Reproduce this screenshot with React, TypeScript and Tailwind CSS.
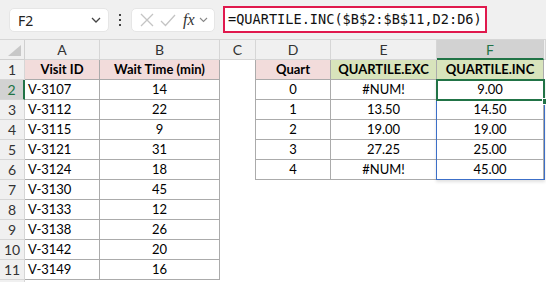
import React from "react";

const FONT = { fontFamily: "Lato, 'Open Sans', sans-serif" };

const colLetters = ["A", "B", "C", "D", "E", "F", ""];

const A = ["V-3107", "V-3112", "V-3115", "V-3121", "V-3124", "V-3130", "V-3133", "V-3138", "V-3142", "V-3149"];
const B = ["14", "22", "9", "31", "18", "45", "12", "26", "20", "16"];
const D = ["0", "1", "2", "3", "4"];
const E = ["#NUM!", "13.50", "19.00", "27.25", "#NUM!"];
const F = ["9.00", "14.50", "19.00", "25.00", "45.00"];

function Toolbar() {
  return (
    <div className="h-[40px] bg-[#f0f0f0] border-b border-[#d6d6d6] flex items-end pb-[7px] box-border">
      <div className="ml-[9px] mb-0 w-[100px] h-[24px] bg-white rounded-[5px] border border-[#e6e6e6] flex items-center justify-between pl-[8px] pr-[7px] box-border">
        <span className="text-[14px] text-[#222]" style={{ fontFamily: "'Noto Sans', sans-serif" }}>F2</span>
        <svg width="10" height="6" viewBox="0 0 10 6">
          <path d="M1 1 L5 5 L9 1" fill="none" stroke="#444" strokeWidth="1.3" />
        </svg>
      </div>
      <div className="w-[22px] h-[24px] flex flex-col items-center justify-center gap-[3px]">
        <div className="w-[2px] h-[2px] bg-[#444]" />
        <div className="w-[2px] h-[2px] bg-[#444]" />
        <div className="w-[2px] h-[2px] bg-[#444]" />
      </div>
      <div className="w-[84px] h-[24px] bg-white rounded-[5px] border border-[#e6e6e6] flex items-center box-border">
        <svg width="14" height="14" viewBox="0 0 14 14" className="ml-[8px]">
          <path d="M1 1 L13 13 M13 1 L1 13" stroke="#c4c4c4" strokeWidth="1.3" fill="none" />
        </svg>
        <svg width="16" height="13" viewBox="0 0 16 13" className="ml-[6px]">
          <path d="M1 7 L5.5 11.5 L15 1" stroke="#c4c4c4" strokeWidth="1.3" fill="none" />
        </svg>
        <span className="ml-[7px] text-[16px] italic text-[#333] leading-none" style={{ fontFamily: "'Liberation Serif', serif" }}>fx</span>
        <svg width="9" height="6" viewBox="0 0 9 6" className="ml-[4px]">
          <path d="M1 1 L4.5 4.5 L8 1" stroke="#888" strokeWidth="1.1" fill="none" />
        </svg>
      </div>
      <div className="ml-[8px] w-[264px] h-[27px] bg-white border-2 border-[#e0194d] box-border flex items-center pl-[3px] mb-[-1px]">
        <span className="text-[13.6px] text-[#111] whitespace-nowrap" style={{ fontFamily: "'DejaVu Sans Mono', monospace" }}>
          =QUARTILE.INC($B$2:$B$11,D2:D6)
        </span>
      </div>
    </div>
  );
}

const TB = "border-r border-b border-[#ababab]";

function Sheet() {
  const cells: React.ReactNode[] = [];
  cells.push(
    <div key="corner" className="relative h-[20px] bg-[#f0f0f0] border-r border-b border-[#d0d0d0]">
      <svg width="13" height="11" viewBox="0 0 13 11" className="absolute right-[3px] bottom-[3px]">
        <path d="M13 0 L13 11 L0 11 Z" fill="#c8c8c8" />
      </svg>
    </div>
  );
  colLetters.forEach((l, i) => {
    const sel = l === "F";
    cells.push(
      <div
        key={"h" + i}
        className={
          "h-[20px] flex items-center justify-center text-[14px] box-border " +
          (sel
            ? "bg-[#d2d2d2] text-[#217346] border-r border-[#d0d0d0] border-b-2 border-b-[#217346]"
            : "bg-[#f0f0f0] text-[#333] border-r border-b border-[#d6d6d6]")
        }
      >
        {l}
      </div>
    );
  });

  for (let r = 1; r <= 12; r++) {
    const selRow = r === 2;
    cells.push(
      <div
        key={"r" + r}
        className={
          "h-[20px] flex items-center justify-center text-[14px] box-border " +
          (selRow
            ? "bg-[#d2d2d2] text-[#217346] border-b border-[#d6d6d6] border-r-2 border-r-[#217346]"
            : "bg-[#f0f0f0] text-[#333] border-r border-b border-[#d6d6d6]")
        }
      >
        {r <= 11 ? r : ""}
      </div>
    );
    if (r === 1) {
      cells.push(<div key={"a" + r} className={"h-[20px] flex items-center justify-center font-bold text-[13px] bg-[#f2dcdb] " + TB}>Visit ID</div>);
      cells.push(<div key={"b" + r} className={"h-[20px] flex items-center justify-center font-bold text-[13px] bg-[#f2dcdb] " + TB}>Wait Time (min)</div>);
    } else if (r <= 11) {
      cells.push(<div key={"a" + r} className={"h-[20px] flex items-center pl-[3px] text-[13px] " + TB}>{A[r - 2]}</div>);
      cells.push(<div key={"b" + r} className={"h-[20px] flex items-center justify-center text-[13px] " + TB}>{B[r - 2]}</div>);
    } else {
      cells.push(<div key={"a" + r} className="h-[20px]" />);
      cells.push(<div key={"b" + r} className="h-[20px]" />);
    }
    cells.push(
      <div key={"c" + r} className={"h-[20px] " + (r <= 6 ? "border-r border-[#ababab]" : "")} />
    );
    if (r === 1) {
      cells.push(<div key={"d" + r} className={"h-[20px] flex items-center justify-center font-bold text-[13px] bg-[#f2dcdb] " + TB}>Quart</div>);
      cells.push(<div key={"e" + r} className={"h-[20px] flex items-center justify-center font-bold text-[13px] bg-[#d8e4bc] " + TB}>QUARTILE.EXC</div>);
      cells.push(<div key={"f" + r} className={"h-[20px] flex items-center justify-center font-bold text-[13px] bg-[#d8e4bc] " + TB}>QUARTILE.INC</div>);
    } else if (r <= 6) {
      cells.push(<div key={"d" + r} className={"h-[20px] flex items-center justify-center text-[13px] " + TB}>{D[r - 2]}</div>);
      cells.push(<div key={"e" + r} className={"h-[20px] flex items-center justify-center text-[13px] " + TB}>{E[r - 2]}</div>);
      cells.push(<div key={"f" + r} className={"h-[20px] flex items-center justify-center text-[13px] " + TB}>{F[r - 2]}</div>);
    } else {
      cells.push(<div key={"d" + r} className="h-[20px]" />);
      cells.push(<div key={"e" + r} className="h-[20px]" />);
      cells.push(<div key={"f" + r} className="h-[20px]" />);
    }
    cells.push(<div key={"g" + r} className="h-[20px]" />);
  }

  return (
    <div className="relative">
      <div className="grid grid-cols-[25px_75px_120px_36px_75px_106px_107px_2px] box-border text-black" style={FONT}>
        {cells}
      </div>
      <div className="absolute left-[436px] top-[39px] w-[109px] h-[101px] border border-[#3c6fc8] pointer-events-none shadow-[0_2px_3px_rgba(0,0,0,0.12)]" />
      <div className="absolute left-[436px] top-[39px] w-[109px] h-[22px] border-2 border-[#217346] pointer-events-none" />
      <div className="absolute left-[542px] top-[58px] w-[5px] h-[5px] bg-[#217346] border border-white pointer-events-none box-content" />
    </div>
  );
}

export default function App() {
  return (
    <div className="w-[546px] h-[282px] overflow-hidden bg-white">
      <Toolbar />
      <Sheet />
    </div>
  );
}
